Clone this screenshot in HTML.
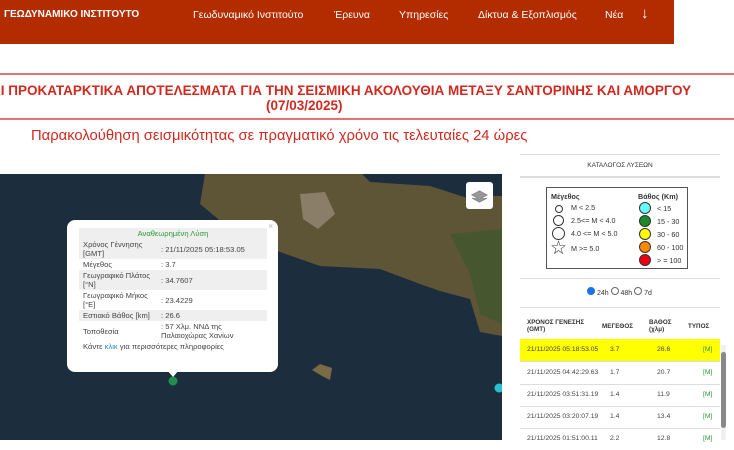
<!DOCTYPE html>
<html><head><meta charset="utf-8"><style>
body{margin:0;width:734px;height:440px;overflow:hidden;background:#fff;font-family:"Liberation Sans",sans-serif;position:relative}
.hdr{position:absolute;left:0;top:0;width:674px;height:44px;background:#b22c00}
.hdr span{position:absolute;top:9px;color:#fff;font-size:10.5px}
.ab{position:absolute}
.line{position:absolute;left:0;width:734px;height:1.5px;background:#e57373}
.t1{position:absolute;color:#d0291f;font-size:13.5px;line-height:15px;font-weight:bold;white-space:nowrap}
.pop td{padding:1px 4px;font-size:7.6px;color:#444;line-height:9px}
.pop tr:nth-child(even) td{background:#efefef}
.side{font-size:7px;color:#333}
.row{position:absolute;left:520px;width:200px;height:22px;font-size:6.8px;color:#444;border-bottom:1px solid #ddd}
.row span{position:absolute;top:7px}
</style></head><body>
<div class="hdr">
<span style="left:4px;font-weight:bold;font-size:10px">ΓΕΩΔΥΝΑΜΙΚΟ ΙΝΣΤΙΤΟΥΤΟ</span>
<span style="left:193px">Γεωδυναμικό Ινστιτούτο</span>
<span style="left:334px">Έρευνα</span>
<span style="left:399px">Υπηρεσίες</span>
<span style="left:478px">Δίκτυα &amp; Εξοπλισμός</span>
<span style="left:605px">Νέα</span>
<span style="left:641px;top:5px;font-size:15px">↓</span>
</div>
<div class="line" style="top:73px"></div>
<div class="t1" style="left:-9px;top:83px">ΑΙ ΠΡΟΚΑΤΑΡΚΤΙΚΑ ΑΠΟΤΕΛΕΣΜΑΤΑ ΓΙΑ ΤΗΝ ΣΕΙΣΜΙΚΗ ΑΚΟΛΟΥΘΙΑ ΜΕΤΑΞΥ ΣΑΝΤΟΡΙΝΗΣ ΚΑΙ ΑΜΟΡΓΟΥ</div>
<div class="t1" style="left:266px;top:98px">(07/03/2025)</div>
<div class="line" style="top:118px"></div>
<div class="ab" style="left:31px;top:128px;color:#d0291f;font-size:14.8px">Παρακολούθηση σεισμικότητας σε πραγματικό χρόνο τις τελευταίες 24 ώρες</div>

<svg class="ab" style="left:0;top:174px" width="502" height="266">
<rect width="502" height="266" fill="#1c2d3d"/>
<path d="M205,0 L200,30 L230,55 L280,78 L320,92 L380,95 L420,110 L440,117 L470,125 L480,158 L502,162 L502,22 L490,22 L470,25 L455,20 L430,12 L400,10 L370,8 L362,0 Z" fill="#5e5536"/>
<path d="M300,20 L325,18 L335,40 L318,55 L303,45 Z" fill="#8a7e68"/>
<path d="M450,60 L502,55 L502,150 L480,140 L470,100 Z" fill="#465730"/>
<path d="M312,196 L320,190 L332,194 L330,206 L322,202 Z" fill="#7a6a45"/>
<circle cx="173" cy="207" r="4.5" fill="#1f8f4a"/>
<circle cx="499" cy="214" r="4.5" fill="#28c1d0"/>
<rect x="466" y="8" width="27" height="27" rx="3" fill="#fff"/>
<path d="M472,21 L479.5,17 L487,21 L479.5,25 Z M472,24 L479.5,28 L487,24" fill="#999" stroke="#888" stroke-width="1"/>
</svg>
<div class="ab pop" style="left:67px;top:220px;width:211px;height:152px;background:#fff;border-radius:8px">
<div class="ab" style="left:201px;top:1px;color:#bbb;font-size:9px">×</div>
<table style="position:absolute;left:12px;top:8px;width:188px;border-collapse:collapse">
<tr><td colspan="2" style="text-align:center;color:#2a9a3a;background:#efefef">Αναθεωρημένη Λύση</td></tr>
<tr><td style="width:70px">Χρόνος Γέννησης [GMT]</td><td>: 21/11/2025 05:18:53.05</td></tr>
<tr><td>Μέγεθος</td><td>: 3.7</td></tr>
<tr><td>Γεωγραφικό Πλάτος [°N]</td><td>: 34.7607</td></tr>
<tr><td>Γεωγραφικό Μήκος [°E]</td><td>: 23.4229</td></tr>
<tr><td>Εστιακό Βάθος [km]</td><td>: 26.6</td></tr>
<tr><td>Τοποθεσία</td><td>: 57 Χλμ. ΝΝΔ της Παλαιοχώρας Χανίων</td></tr>
<tr><td colspan="2" style="background:#fff">Κάντε <span style="color:#2a8ac0">κλικ</span> για περισσότερες πληροφορίες</td></tr>
</table>
<div class="ab" style="left:100px;top:150px;width:0;height:0;border-left:6px solid transparent;border-right:6px solid transparent;border-top:7px solid #fff"></div>
</div>

<div class="ab" style="left:520px;top:154px;width:200px;height:1px;background:#ddd"></div>
<div class="ab side" style="left:520px;top:162px;width:200px;text-align:center;font-size:6.5px">ΚΑΤΑΛΟΓΟΣ ΛΥΣΕΩΝ</div>
<div class="ab" style="left:520px;top:176px;width:200px;height:2px;background:#ddd"></div>
<div class="ab side" style="left:546px;top:187px;width:140px;height:80px;border:1px solid #555;font-size:7.2px">
<b class="ab" style="left:4px;top:4px">Μέγεθος</b>
<b class="ab" style="left:91px;top:4px">Βάθος (Km)</b>
<span class="ab" style="left:8px;top:17px;width:6px;height:6px;border:1px solid #333;border-radius:50%"></span><span class="ab" style="left:24px;top:15px">M &lt; 2.5</span>
<span class="ab" style="left:6px;top:27px;width:9px;height:9px;border:1px solid #333;border-radius:50%"></span><span class="ab" style="left:24px;top:28px">2.5&lt;= M &lt; 4.0</span>
<span class="ab" style="left:5px;top:39px;width:11px;height:11px;border:1px solid #333;border-radius:50%"></span><span class="ab" style="left:24px;top:41px">4.0 &lt;= M &lt; 5.0</span>
<span class="ab" style="left:3px;top:51px;font-size:19px;color:#333;line-height:19px">☆</span><span class="ab" style="left:24px;top:56px">M &gt;= 5.0</span>
<span class="ab" style="left:92px;top:14px;width:10px;height:10px;border-radius:50%;background:#6ff;border:1px solid #333"></span><span class="ab" style="left:110px;top:16px">&lt; 15</span>
<span class="ab" style="left:92px;top:27px;width:10px;height:10px;border-radius:50%;background:#1a8a2a;border:1px solid #333"></span><span class="ab" style="left:110px;top:29px">15 - 30</span>
<span class="ab" style="left:92px;top:40px;width:10px;height:10px;border-radius:50%;background:#ff0;border:1px solid #333"></span><span class="ab" style="left:110px;top:42px">30 - 60</span>
<span class="ab" style="left:92px;top:53px;width:10px;height:10px;border-radius:50%;background:#f80;border:1px solid #333"></span><span class="ab" style="left:110px;top:55px">60 - 100</span>
<span class="ab" style="left:92px;top:66px;width:10px;height:10px;border-radius:50%;background:#e01;border:1px solid #333"></span><span class="ab" style="left:110px;top:68px">&gt; = 100</span>
</div>
<div class="ab" style="left:520px;top:278px;width:200px;height:1px;background:#ddd"></div>
<div class="ab side" style="left:587px;top:287px"><span style="display:inline-block;width:6px;height:6px;border-radius:50%;background:#1a73e8;border:1px solid #1a73e8"></span> 24h <span style="display:inline-block;width:6px;height:6px;border-radius:50%;border:1px solid #666"></span> 48h <span style="display:inline-block;width:6px;height:6px;border-radius:50%;border:1px solid #666"></span> 7d</div>
<div class="ab" style="left:520px;top:307px;width:200px;height:1px;background:#ddd"></div>
<div class="ab side" style="left:527px;top:319px;font-size:6.3px;font-weight:bold">ΧΡΟΝΟΣ ΓΕΝΕΣΗΣ<br>(GMT)</div>
<div class="ab side" style="left:602px;top:323px;font-size:6.3px;font-weight:bold">ΜΕΓΕΘΟΣ</div>
<div class="ab side" style="left:649px;top:319px;font-size:6.3px;font-weight:bold">ΒΑΘΟΣ<br>(χλμ)</div>
<div class="ab side" style="left:688px;top:323px;font-size:6.3px;font-weight:bold">ΤΥΠΟΣ</div>
<div class="row" style="top:339px;background:#ffff00"><span style="left:7px">21/11/2025 05:18:53.05</span><span style="left:90px">3.7</span><span style="left:137px">26.6</span><span style="left:183px;color:#2a9a3a">[M]</span></div>
<div class="row" style="top:362px"><span style="left:7px">21/11/2025 04:42:29.63</span><span style="left:90px">1.7</span><span style="left:137px">20.7</span><span style="left:183px;color:#2a9a3a">[M]</span></div>
<div class="row" style="top:384px"><span style="left:7px">21/11/2025 03:51:31.19</span><span style="left:90px">1.4</span><span style="left:137px">11.9</span><span style="left:183px;color:#2a9a3a">[M]</span></div>
<div class="row" style="top:406px"><span style="left:7px">21/11/2025 03:20:07.19</span><span style="left:90px">1.4</span><span style="left:137px">13.4</span><span style="left:183px;color:#2a9a3a">[M]</span></div>
<div class="row" style="top:428px;border:none"><span style="left:7px">21/11/2025 01:51:00.11</span><span style="left:90px">2.2</span><span style="left:137px">12.8</span><span style="left:183px;color:#2a9a3a">[M]</span></div>
<div class="ab" style="left:721px;top:345px;width:5px;height:95px;background:#f0f0f0"></div>
<div class="ab" style="left:721px;top:352px;width:5px;height:76px;background:#888;border-radius:3px"></div>
</body></html>
